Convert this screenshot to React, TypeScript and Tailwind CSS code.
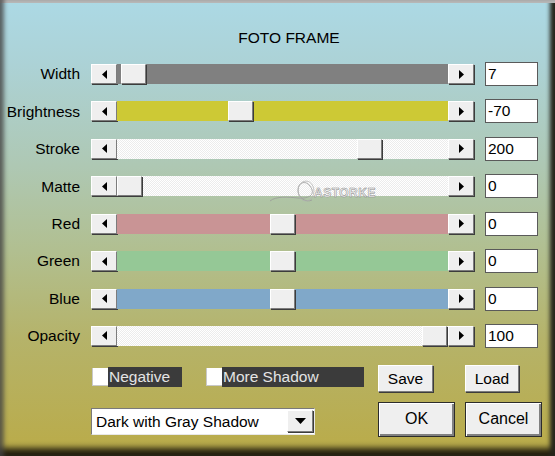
import React from "react"

type Row = {
  label: string
  value: string
  track: string
  pos: number
}

const rows: Row[] = [
  { label: "Width", value: "7", track: "bg-[#808080]", pos: 4 },
  { label: "Brightness", value: "-70", track: "bg-[#cdc935]", pos: 111 },
  { label: "Stroke", value: "200", track: "bg-[repeating-conic-gradient(#ffffff_0_25%,#ececec_0_50%)] bg-[length:2px_2px]", pos: 240 },
  { label: "Matte", value: "0", track: "bg-[repeating-conic-gradient(#ffffff_0_25%,#ececec_0_50%)] bg-[length:2px_2px]", pos: 0 },
  { label: "Red", value: "0", track: "bg-[#c99495]", pos: 153 },
  { label: "Green", value: "0", track: "bg-[#95c896]", pos: 153 },
  { label: "Blue", value: "0", track: "bg-[#80a8c9]", pos: 153 },
  { label: "Opacity", value: "100", track: "bg-[repeating-conic-gradient(#ffffff_0_25%,#ececec_0_50%)] bg-[length:2px_2px]", pos: 305 },
]

const bevel =
  "border border-t-white border-l-white border-r-[#7c7c7c] border-b-[#7c7c7c] bg-[#efefef] shadow-[1px_1px_0_#3c3c3c]"

const ArrowButton = ({ dir }: { dir: "left" | "right" | "down" }) => (
  <div className={`flex h-full w-[26px] shrink-0 items-center justify-center ${bevel}`}>
    {dir === "left" && (
      <svg width="5" height="9" viewBox="0 0 5 9">
        <polygon points="5,0 0,4.5 5,9" fill="#000" />
      </svg>
    )}
    {dir === "right" && (
      <svg width="5" height="9" viewBox="0 0 5 9">
        <polygon points="0,0 5,4.5 0,9" fill="#000" />
      </svg>
    )}
    {dir === "down" && (
      <svg width="11" height="6" viewBox="0 0 11 6">
        <polygon points="0,0 11,0 5.5,6" fill="#000" />
      </svg>
    )}
  </div>
)

const Slider = ({ track, pos }: { track: string; pos: number }) => (
  <div className="flex h-[20px] w-[383px]">
    <ArrowButton dir="left" />
    <div className={`relative flex-1 ${track}`}>
      <div className={`absolute top-0 h-[20px] w-[25px] ${bevel}`} style={{ left: pos }} />
    </div>
    <ArrowButton dir="right" />
  </div>
)

const Check = ({ label, width }: { label: string; width: string }) => (
  <div className="flex h-[20px] items-stretch">
    <div className="mt-[1px] h-[18px] w-[16px] border-b border-l border-[#c8c8c8] bg-white" />
    <div className={`flex items-center bg-[#3b3b3b] pl-[1px] text-[15.5px] leading-none text-[#e4e4e4] ${width}`}>
      {label}
    </div>
  </div>
)

const Watermark = () => (
  <svg className="pointer-events-none absolute left-[266px] top-[176px]" width="120" height="32" viewBox="0 0 120 32">
    <path d="M4 25 C 10 20, 22 21, 32 22 C 44 23, 50 18, 44 10 C 40 4, 32 6, 32 14 C 32 22, 40 27, 46 24" fill="none" stroke="#9a9a9a" strokeWidth="0.8" />
    <ellipse cx="40" cy="15" rx="8" ry="10" fill="none" stroke="#b0b0b0" strokeWidth="0.7" />
    <text x="48" y="21" fontFamily="'Liberation Sans', sans-serif" fontSize="12" fontWeight="bold" letterSpacing="0.5" fill="#f2f2f2" stroke="#8a8a8a" strokeWidth="0.5">
      ASTORKE
    </text>
  </svg>
)

const App = () => {
  return (
    <div
      className="relative flex h-[456px] w-[555px] flex-col overflow-hidden bg-[linear-gradient(180deg,#acd9e5_0%,#acd2d6_14%,#aec8b4_36%,#b1bf90_55%,#b5b36a_74%,#baab48_100%)] font-['Liberation_Sans',Arial,sans-serif] text-black shadow-[inset_6px_0_4px_-2px_rgba(70,70,70,0.75),inset_0_3px_0_#b8b8b8,inset_-7px_0_4px_-2px_#26261c,inset_0_-11px_6px_-3px_#252010]"
    >
      <div className="pl-[23px] pt-[29px] text-center text-[15.5px] leading-[18px]">FOTO FRAME</div>

      <div className="mt-[15px] flex flex-col gap-[13.43px]">
        {rows.map((r) => (
          <div key={r.label} className="flex h-[24px] items-center">
            <div className="w-[80px] text-right text-[15.5px] leading-none">{r.label}</div>
            <div className="ml-[11px]">
              <Slider track={r.track} pos={r.pos} />
            </div>
            <input
              readOnly
              value={r.value}
              className="ml-[11px] h-[24px] w-[53px] border border-[#5a5a5a] bg-white pl-[2px] text-[15.5px] leading-none outline-none"
            />
          </div>
        ))}
      </div>

      <div className="mt-[17px] flex pl-[91px]">
        <div className="flex w-[271px] flex-col">
          <div className="mt-[2px] flex gap-[24px] pl-[1px]">
            <Check label="Negative" width="w-[74px]" />
            <Check label="More Shadow" width="w-[142px]" />
          </div>
          <div className="mt-[21px] flex h-[27px] w-[224px] items-center border border-t-[#7a7a7a] border-l-[#7a7a7a] border-r-[#e8e8e8] border-b-[#e8e8e8] bg-white pr-[1px]">
            <div className="flex-1 pl-[4px] text-[15.5px] leading-none">Dark with Gray Shadow</div>
            <div className="h-[22px]">
              <ArrowButton dir="down" />
            </div>
          </div>
        </div>

        <div className="ml-[16px] grid grid-cols-[87px_auto] gap-y-[10px]">
          <button className={`h-[27px] w-[55px] text-[15.5px] leading-none ${bevel}`}>Save</button>
          <button className={`h-[27px] w-[54px] text-[15.5px] leading-none ${bevel}`}>Load</button>
          <button className="h-[35px] w-[77px] border border-[#2c2c2c] bg-[#efefef] text-[16px] leading-none shadow-[inset_1px_1px_0_#ffffff,inset_-2px_-2px_0_#808080]">
            OK
          </button>
          <button className="h-[35px] w-[77px] border border-[#2c2c2c] bg-[#efefef] text-[16px] leading-none shadow-[inset_1px_1px_0_#ffffff,inset_-2px_-2px_0_#808080]">
            Cancel
          </button>
        </div>
      </div>

      <Watermark />
    </div>
  )
}

export default App
